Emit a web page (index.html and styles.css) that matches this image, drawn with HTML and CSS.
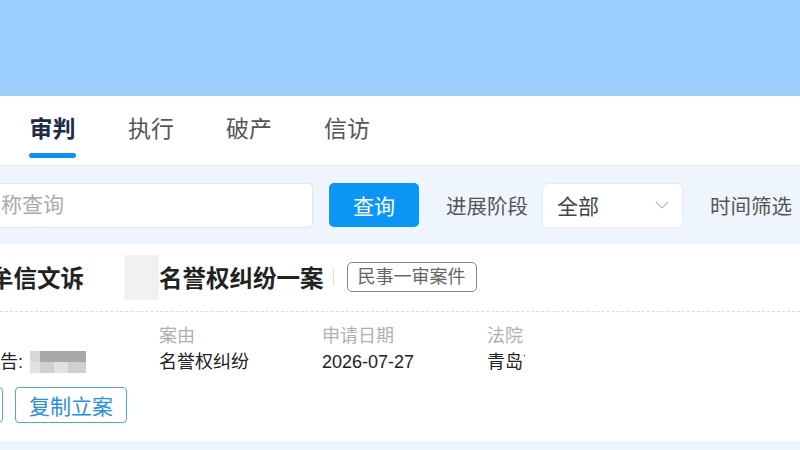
FILE: index.html
```html
<!DOCTYPE html>
<html lang="zh-CN">
<head>
    <meta charset="UTF-8">
    <meta name="viewport" content="width=device-width, initial-scale=1">
    <title>案件列表</title>
    <link rel="stylesheet" href="styles.css">
</head>
<body>
    <div class="banner"></div>

    <div class="tabs">
        <div class="tab active">审判<span class="bar"></span></div>
        <div class="tab">执行</div>
        <div class="tab">破产</div>
        <div class="tab">信访</div>
    </div>

    <div class="filters">
        <input class="search" type="text" placeholder="按名称查询">
        <button class="search-btn">查询</button>
        <span class="filter-label">进展阶段</span>
        <div class="select">
            <span>全部</span>
            <svg width="14" height="9" viewBox="0 0 14 9"><polyline points="1,1 7,7 13,1" fill="none" stroke="#bcbcbc" stroke-width="1.2"/></svg>
        </div>
        <span class="filter-label">时间筛选</span>
    </div>

    <div class="card">
        <div class="card-head">
            <span class="title">牟信文诉</span>
            <span class="mask"></span>
            <span class="title">名誉权纠纷一案</span>
            <span class="divider"></span>
            <span class="tag">民事一审案件</span>
        </div>
        <div class="info">
            <div class="col first">
                <div class="label">&nbsp;</div>
                <div class="value">原告:<span class="mosaic"><i class="c1"></i><i class="c2"></i><i class="c2"></i><i class="c2"></i><i class="c3"></i><i class="c4"></i><i class="c3"></i><i class="c4"></i></span></div>
            </div>
            <div class="col">
                <div class="label">案由</div>
                <div class="value">名誉权纠纷</div>
            </div>
            <div class="col">
                <div class="label">申请日期</div>
                <div class="value">2026-07-27</div>
            </div>
            <div class="col">
                <div class="label">法院</div>
                <div class="value court">青岛市中级人民法院</div>
            </div>
        </div>
        <div class="actions">
            <button class="line-btn hidden-left">查看详情</button>
            <button class="line-btn">复制立案</button>
        </div>
    </div>
</body>
</html>
```

FILE: styles.css
```css
body {
    margin: 0;
    font-family: "Liberation Sans", "Noto Sans CJK SC", sans-serif;
    background-color: #eff5fc;
    overflow: hidden;
}
.banner {
    height: 95px;
    background-color: #9bcefd;
    border-bottom: 1px solid #a9cbeb;
}
.tabs {
    display: flex;
    gap: 52px;
    height: 70px;
    padding: 17px 0 0 29px;
    box-sizing: border-box;
    background-color: #fff;
    border-bottom: 1px solid #e4e9ef;
}
.tab {
    display: flex;
    flex-direction: column;
    align-items: center;
    font-size: 23px;
    line-height: 32px;
    color: #555;
}
.tab.active {
    font-weight: bold;
    color: #1c2b48;
}
.bar {
    width: 47px;
    height: 5px;
    margin-top: 8px;
    border-radius: 3px;
    background-color: #1090ec;
}
.filters {
    display: flex;
    align-items: center;
    height: 78px;
    background-color: #eff5fc;
}
.search {
    width: 373px;
    height: 45px;
    margin-left: -60px;
    padding: 0 0 0 18px;
    box-sizing: border-box;
    border: 1px solid #e3e7ec;
    border-radius: 5px;
    background-color: #fff;
    font-family: inherit;
    font-size: 21px;
    outline: none;
}
.search::placeholder {
    color: #aaa;
}
.search-btn {
    width: 90px;
    height: 44px;
    margin-left: 16px;
    border: none;
    border-radius: 5px;
    background-color: #0b96f5;
    color: #fff;
    font-family: inherit;
    font-size: 21px;
}
.filter-label {
    margin-left: 27px;
    font-size: 20.5px;
    color: #555;
}
.select {
    display: flex;
    align-items: center;
    justify-content: space-between;
    width: 141px;
    height: 45px;
    margin-left: 14px;
    padding: 0 13px 0 14px;
    box-sizing: border-box;
    border: 1px solid #e8ecf0;
    border-radius: 6px;
    background-color: #fff;
    font-size: 21px;
    color: #444;
}
.card {
    padding: 18px 0 18px;
    background-color: #fff;
}
.card-head {
    display: flex;
    align-items: center;
    height: 30px;
    margin-left: -10px;
    padding-bottom: 19px;
    border-bottom: 1px dashed #dcdcdc;
}
.title {
    font-size: 23.5px;
    font-weight: bold;
    color: #222;
    white-space: nowrap;
}
.mask {
    width: 75px;
    height: 45px;
    background: linear-gradient(to right, #fff 0, #fff 40px, #f1f1f1 41px);
}
.divider {
    width: 1px;
    height: 18px;
    margin: 0 13px 0 9px;
    background-color: #ddd;
}
.tag {
    height: 30px;
    padding: 0 10px;
    border: 1px solid #888;
    border-radius: 5px;
    box-sizing: border-box;
    font-size: 18px;
    line-height: 28px;
    color: #666;
}
.info {
    display: flex;
    margin-left: -18px;
    padding-top: 11px;
    font-size: 18px;
    line-height: 26px;
}
.col {
    width: 163px;
}
.col.first {
    width: 177px;
}
.col:nth-child(3) {
    width: 165px;
}
.label {
    color: #b0b0b0;
}
.value {
    display: flex;
    align-items: center;
    color: #222;
    white-space: nowrap;
}
.court {
    width: 38px;
    overflow: hidden;
}
.mosaic {
    display: grid;
    grid-template-columns: 10px 14px 14px 18px;
    grid-template-rows: 11px 11px;
    margin-left: 7px;
}
.mosaic i {
    display: block;
}
.mosaic .c1 { background-color: #d8d8d8; }
.mosaic .c2 { background-color: #a9a9a9; }
.mosaic .c3 { background-color: #e2e2e2; }
.mosaic .c4 { background-color: #d0d0d0; }
.actions {
    display: flex;
    gap: 12px;
    margin-top: 12px;
}
.line-btn {
    height: 36px;
    padding: 0 13px;
    border: 1px solid #4ea5e0;
    border-radius: 4px;
    background-color: #fff;
    color: #2a8fdb;
    font-family: inherit;
    font-size: 21px;
}
.hidden-left {
    margin-left: -109px;
}
```
